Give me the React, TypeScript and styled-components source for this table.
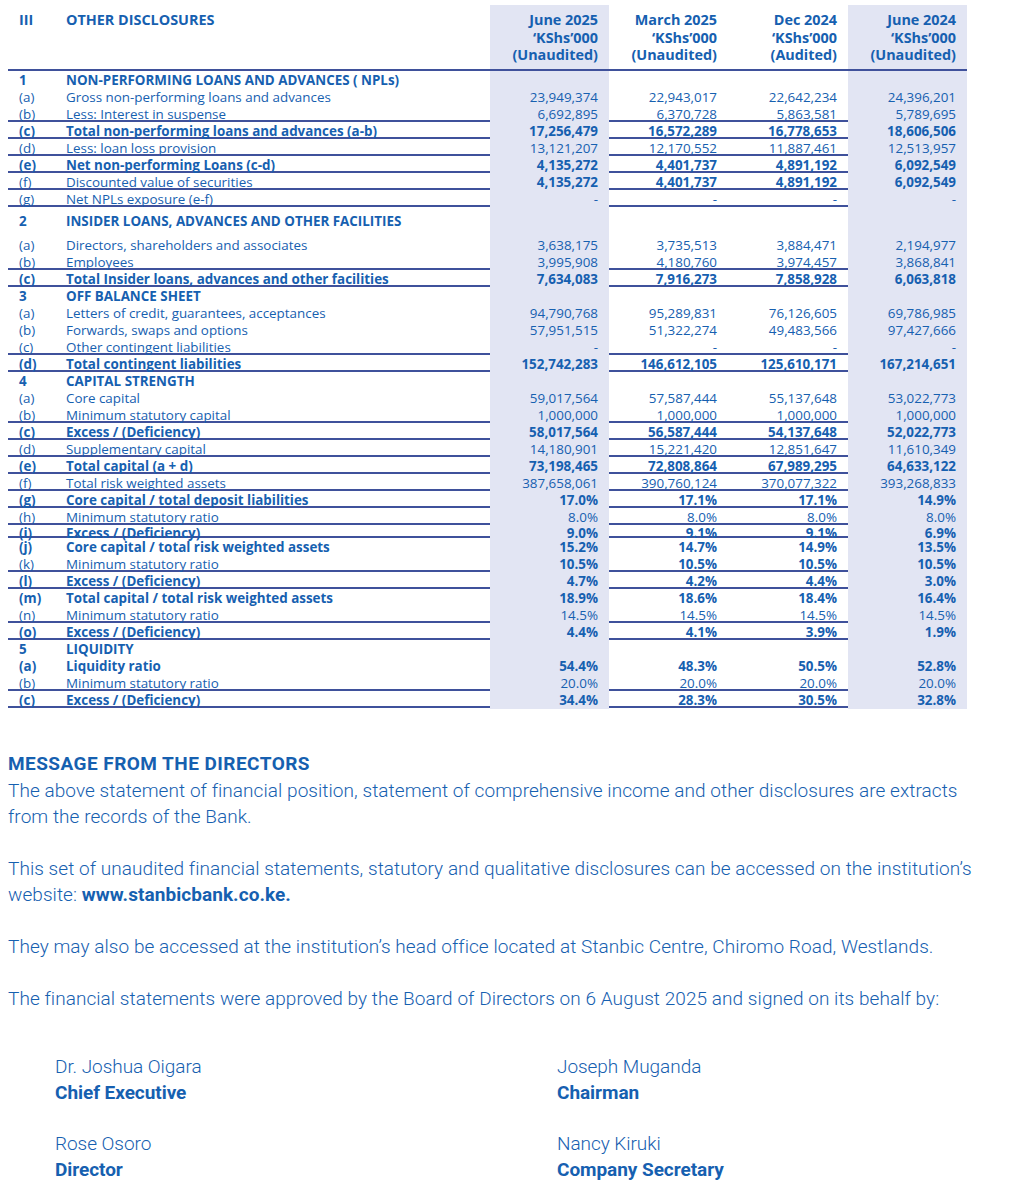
import styled, { createGlobalStyle } from "styled-components";

const GlobalStyle = createGlobalStyle`
  body {
    margin: 0;
    background: #ffffff;
    font-family: "Open Sans", "Liberation Sans", sans-serif;
    color: #1660b0;
  }
`;

const BLUE = "#1660b0";
const LINE = "#3f519b";
const SHADE = "#e2e5f3";

type RowData = {
  code: string;
  label: string;
  values?: string[];
  head?: boolean;
  bold?: boolean;
  boldValues?: boolean;
  line?: boolean;
  height?: number;
};

const rows: RowData[] = [
  { code: "1", label: "NON-PERFORMING LOANS AND ADVANCES ( NPLs)", head: true },
  { code: "(a)", label: "Gross non-performing loans and advances", values: ["23,949,374", "22,943,017", "22,642,234", "24,396,201"] },
  { code: "(b)", label: "Less: Interest in suspense", values: ["6,692,895", "6,370,728", "5,863,581", "5,789,695"], line: true },
  { code: "(c)", label: "Total non-performing loans and advances (a-b)", values: ["17,256,479", "16,572,289", "16,778,653", "18,606,506"], bold: true, line: true },
  { code: "(d)", label: "Less: loan loss provision", values: ["13,121,207", "12,170,552", "11,887,461", "12,513,957"], line: true },
  { code: "(e)", label: "Net non-performing Loans (c-d)", values: ["4,135,272", "4,401,737", "4,891,192", "6,092,549"], bold: true, line: true },
  { code: "(f)", label: "Discounted value of securities", values: ["4,135,272", "4,401,737", "4,891,192", "6,092,549"], boldValues: true, line: true },
  { code: "(g)", label: "Net NPLs exposure (e-f)", values: ["-", "-", "-", "-"], line: true },
  { code: "2", label: "INSIDER LOANS, ADVANCES AND OTHER FACILITIES", head: true, height: 29 },
  { code: "(a)", label: "Directors, shareholders and associates", values: ["3,638,175", "3,735,513", "3,884,471", "2,194,977"] },
  { code: "(b)", label: "Employees", values: ["3,995,908", "4,180,760", "3,974,457", "3,868,841"], line: true },
  { code: "(c)", label: "Total Insider loans, advances and other facilities", values: ["7,634,083", "7,916,273", "7,858,928", "6,063,818"], bold: true, line: true },
  { code: "3", label: "OFF BALANCE SHEET", head: true },
  { code: "(a)", label: "Letters of credit, guarantees, acceptances", values: ["94,790,768", "95,289,831", "76,126,605", "69,786,985"] },
  { code: "(b)", label: "Forwards, swaps and options", values: ["57,951,515", "51,322,274", "49,483,566", "97,427,666"] },
  { code: "(c)", label: "Other contingent liabilities", values: ["-", "-", "-", "-"], line: true },
  { code: "(d)", label: "Total contingent liabilities", values: ["152,742,283", "146,612,105", "125,610,171", "167,214,651"], bold: true, line: true },
  { code: "4", label: "CAPITAL STRENGTH", head: true },
  { code: "(a)", label: "Core capital", values: ["59,017,564", "57,587,444", "55,137,648", "53,022,773"] },
  { code: "(b)", label: "Minimum statutory capital", values: ["1,000,000", "1,000,000", "1,000,000", "1,000,000"], line: true },
  { code: "(c)", label: "Excess / (Deficiency)", values: ["58,017,564", "56,587,444", "54,137,648", "52,022,773"], bold: true, line: true },
  { code: "(d)", label: "Supplementary capital", values: ["14,180,901", "15,221,420", "12,851,647", "11,610,349"], line: true },
  { code: "(e)", label: "Total capital (a + d)", values: ["73,198,465", "72,808,864", "67,989,295", "64,633,122"], bold: true, line: true },
  { code: "(f)", label: "Total risk weighted assets", values: ["387,658,061", "390,760,124", "370,077,322", "393,268,833"], line: true },
  { code: "(g)", label: "Core capital / total deposit liabilities", values: ["17.0%", "17.1%", "17.1%", "14.9%"], bold: true, line: true },
  { code: "(h)", label: "Minimum statutory ratio", values: ["8.0%", "8.0%", "8.0%", "8.0%"], line: true },
  { code: "(i)", label: "Excess / (Deficiency)", values: ["9.0%", "9.1%", "9.1%", "6.9%"], bold: true, line: true, height: 13 },
  { code: "(j)", label: "Core capital / total risk weighted assets", values: ["15.2%", "14.7%", "14.9%", "13.5%"], bold: true },
  { code: "(k)", label: "Minimum statutory  ratio", values: ["10.5%", "10.5%", "10.5%", "10.5%"], boldValues: true, line: true },
  { code: "(l)", label: "Excess / (Deficiency)", values: ["4.7%", "4.2%", "4.4%", "3.0%"], bold: true, line: true },
  { code: "(m)", label: "Total capital / total risk weighted assets", values: ["18.9%", "18.6%", "18.4%", "16.4%"], bold: true },
  { code: "(n)", label: "Minimum statutory  ratio", values: ["14.5%", "14.5%", "14.5%", "14.5%"], line: true },
  { code: "(o)", label: "Excess / (Deficiency)", values: ["4.4%", "4.1%", "3.9%", "1.9%"], bold: true, line: true },
  { code: "5", label: "LIQUIDITY", head: true },
  { code: "(a)", label: "Liquidity ratio", values: ["54.4%", "48.3%", "50.5%", "52.8%"], bold: true },
  { code: "(b)", label: "Minimum statutory  ratio", values: ["20.0%", "20.0%", "20.0%", "20.0%"], line: true },
  { code: "(c)", label: "Excess / (Deficiency)", values: ["34.4%", "28.3%", "30.5%", "32.8%"], bold: true, line: true },
];

const columns = [
  ["June 2025", "‘KShs’000", "(Unaudited)"],
  ["March 2025", "‘KShs’000", "(Unaudited)"],
  ["Dec 2024", "‘KShs’000", "(Audited)"],
  ["June 2024", "‘KShs’000", "(Unaudited)"],
];

const Page = styled.div`
  padding: 5px 8px 20px 8px;
`;

const Table = styled.div`
  width: 959px;
  font-size: 13.4px;
  color: ${BLUE};
`;

const Row = styled.div<{ $h: number; $line?: boolean }>`
  display: grid;
  grid-template-columns: 58px 424px 119px 119px 120px 119px;
  height: ${(p) => p.$h}px;
  box-sizing: border-box;
  border-bottom: ${(p) => (p.$line ? `2px solid ${LINE}` : "none")};
`;

const Cell = styled.div<{ $shaded?: boolean; $bold?: boolean; $num?: boolean; $pad: number }>`
  background: ${(p) => (p.$shaded ? SHADE : "transparent")};
  font-weight: ${(p) => (p.$bold ? 700 : 400)};
  text-align: ${(p) => (p.$num ? "right" : "left")};
  padding: ${(p) => p.$pad}px ${(p) => (p.$num ? "11px" : "0")} 0 0;
  line-height: 17px;
  white-space: nowrap;
  overflow: visible;
`;

const CodeCell = styled(Cell)`
  padding-left: 11px;
`;

const HeadRow = styled.div`
  display: grid;
  grid-template-columns: 58px 424px 119px 119px 120px 119px;
  height: 66px;
  box-sizing: border-box;
  border-bottom: 2px solid ${LINE};
`;

const HeadCell = styled.div<{ $shaded?: boolean; $num?: boolean }>`
  background: ${(p) => (p.$shaded ? SHADE : "transparent")};
  font-size: 14.4px;
  font-weight: 700;
  text-align: ${(p) => (p.$num ? "right" : "left")};
  padding: 6px ${(p) => (p.$num ? "11px" : "0")} 0 0;
  line-height: 17.5px;
`;

const HeadCode = styled(HeadCell)`
  padding-left: 11px;
`;

const Message = styled.section`
  margin-top: 43px;
  width: 1000px;
  font-family: "Roboto", "Liberation Sans", sans-serif;
  font-size: 19px;
  font-weight: 300;
  line-height: 26px;
  color: ${BLUE};
  letter-spacing: 0.06px;
`;

const Title = styled.div`
  font-weight: 700;
  letter-spacing: 0.45px;
  margin-bottom: 1px;
`;

const Para = styled.p`
  margin: 0 0 26px 0;
  max-width: 978px;
`;

const Strong = styled.strong`
  font-weight: 700;
`;

const Signatures = styled.div`
  display: grid;
  grid-template-columns: 502px 1fr;
  row-gap: 25px;
  padding-left: 47px;
  margin-top: 42px;
  letter-spacing: -0.05px;
`;

const Signer = styled.div`
  display: flex;
  flex-direction: column;
`;

const SignerRole = styled.span`
  font-weight: 700;
`;

const signers = [
  ["Dr. Joshua Oigara", "Chief Executive"],
  ["Joseph Muganda", "Chairman"],
  ["Rose Osoro", "Director"],
  ["Nancy Kiruki", "Company Secretary"],
];

const App = () => {
  return (
    <Page>
      <GlobalStyle />
      <Table>
        <HeadRow>
          <HeadCode>III</HeadCode>
          <HeadCell>OTHER DISCLOSURES</HeadCell>
          {columns.map((c, i) => (
            <HeadCell key={i} $num $shaded={i === 0 || i === 3}>
              {c.map((t) => (
                <div key={t}>{t}</div>
              ))}
            </HeadCell>
          ))}
        </HeadRow>
        {rows.map((r, idx) => {
          const h = r.height ?? 17;
          const pad = h > 20 ? 6 : h < 15 ? 0 : 1;
          const boldLabel = r.head || r.bold;
          const boldVal = r.bold || r.boldValues;
          const vals = r.values ?? ["", "", "", ""];
          return (
            <Row key={idx} $h={h} $line={r.line}>
              <CodeCell $pad={pad} $bold={boldLabel}>
                {r.code}
              </CodeCell>
              <Cell $pad={pad} $bold={boldLabel}>
                {r.label}
              </Cell>
              {vals.map((v, i) => (
                <Cell key={i} $pad={pad} $num $bold={boldVal} $shaded={i === 0 || i === 3}>
                  {v}
                </Cell>
              ))}
            </Row>
          );
        })}
      </Table>

      <Message>
        <Title>MESSAGE FROM THE DIRECTORS</Title>
        <Para>
          The above statement of financial position, statement of comprehensive income and other
          disclosures are extracts from the records of the Bank.
        </Para>
        <Para>
          This set of unaudited financial statements, statutory and qualitative disclosures can be
          accessed on the institution’s website: <Strong>www.stanbicbank.co.ke.</Strong>
        </Para>
        <Para>
          They may also be accessed at the institution’s head office located at Stanbic Centre,
          Chiromo Road, Westlands.
        </Para>
        <Para>
          The financial statements were approved by the Board of Directors on 6 August 2025 and
          signed on its behalf by:
        </Para>
        <Signatures>
          {signers.map(([name, role]) => (
            <Signer key={name}>
              <span>{name}</span>
              <SignerRole>{role}</SignerRole>
            </Signer>
          ))}
        </Signatures>
      </Message>
    </Page>
  );
};

export default App;
